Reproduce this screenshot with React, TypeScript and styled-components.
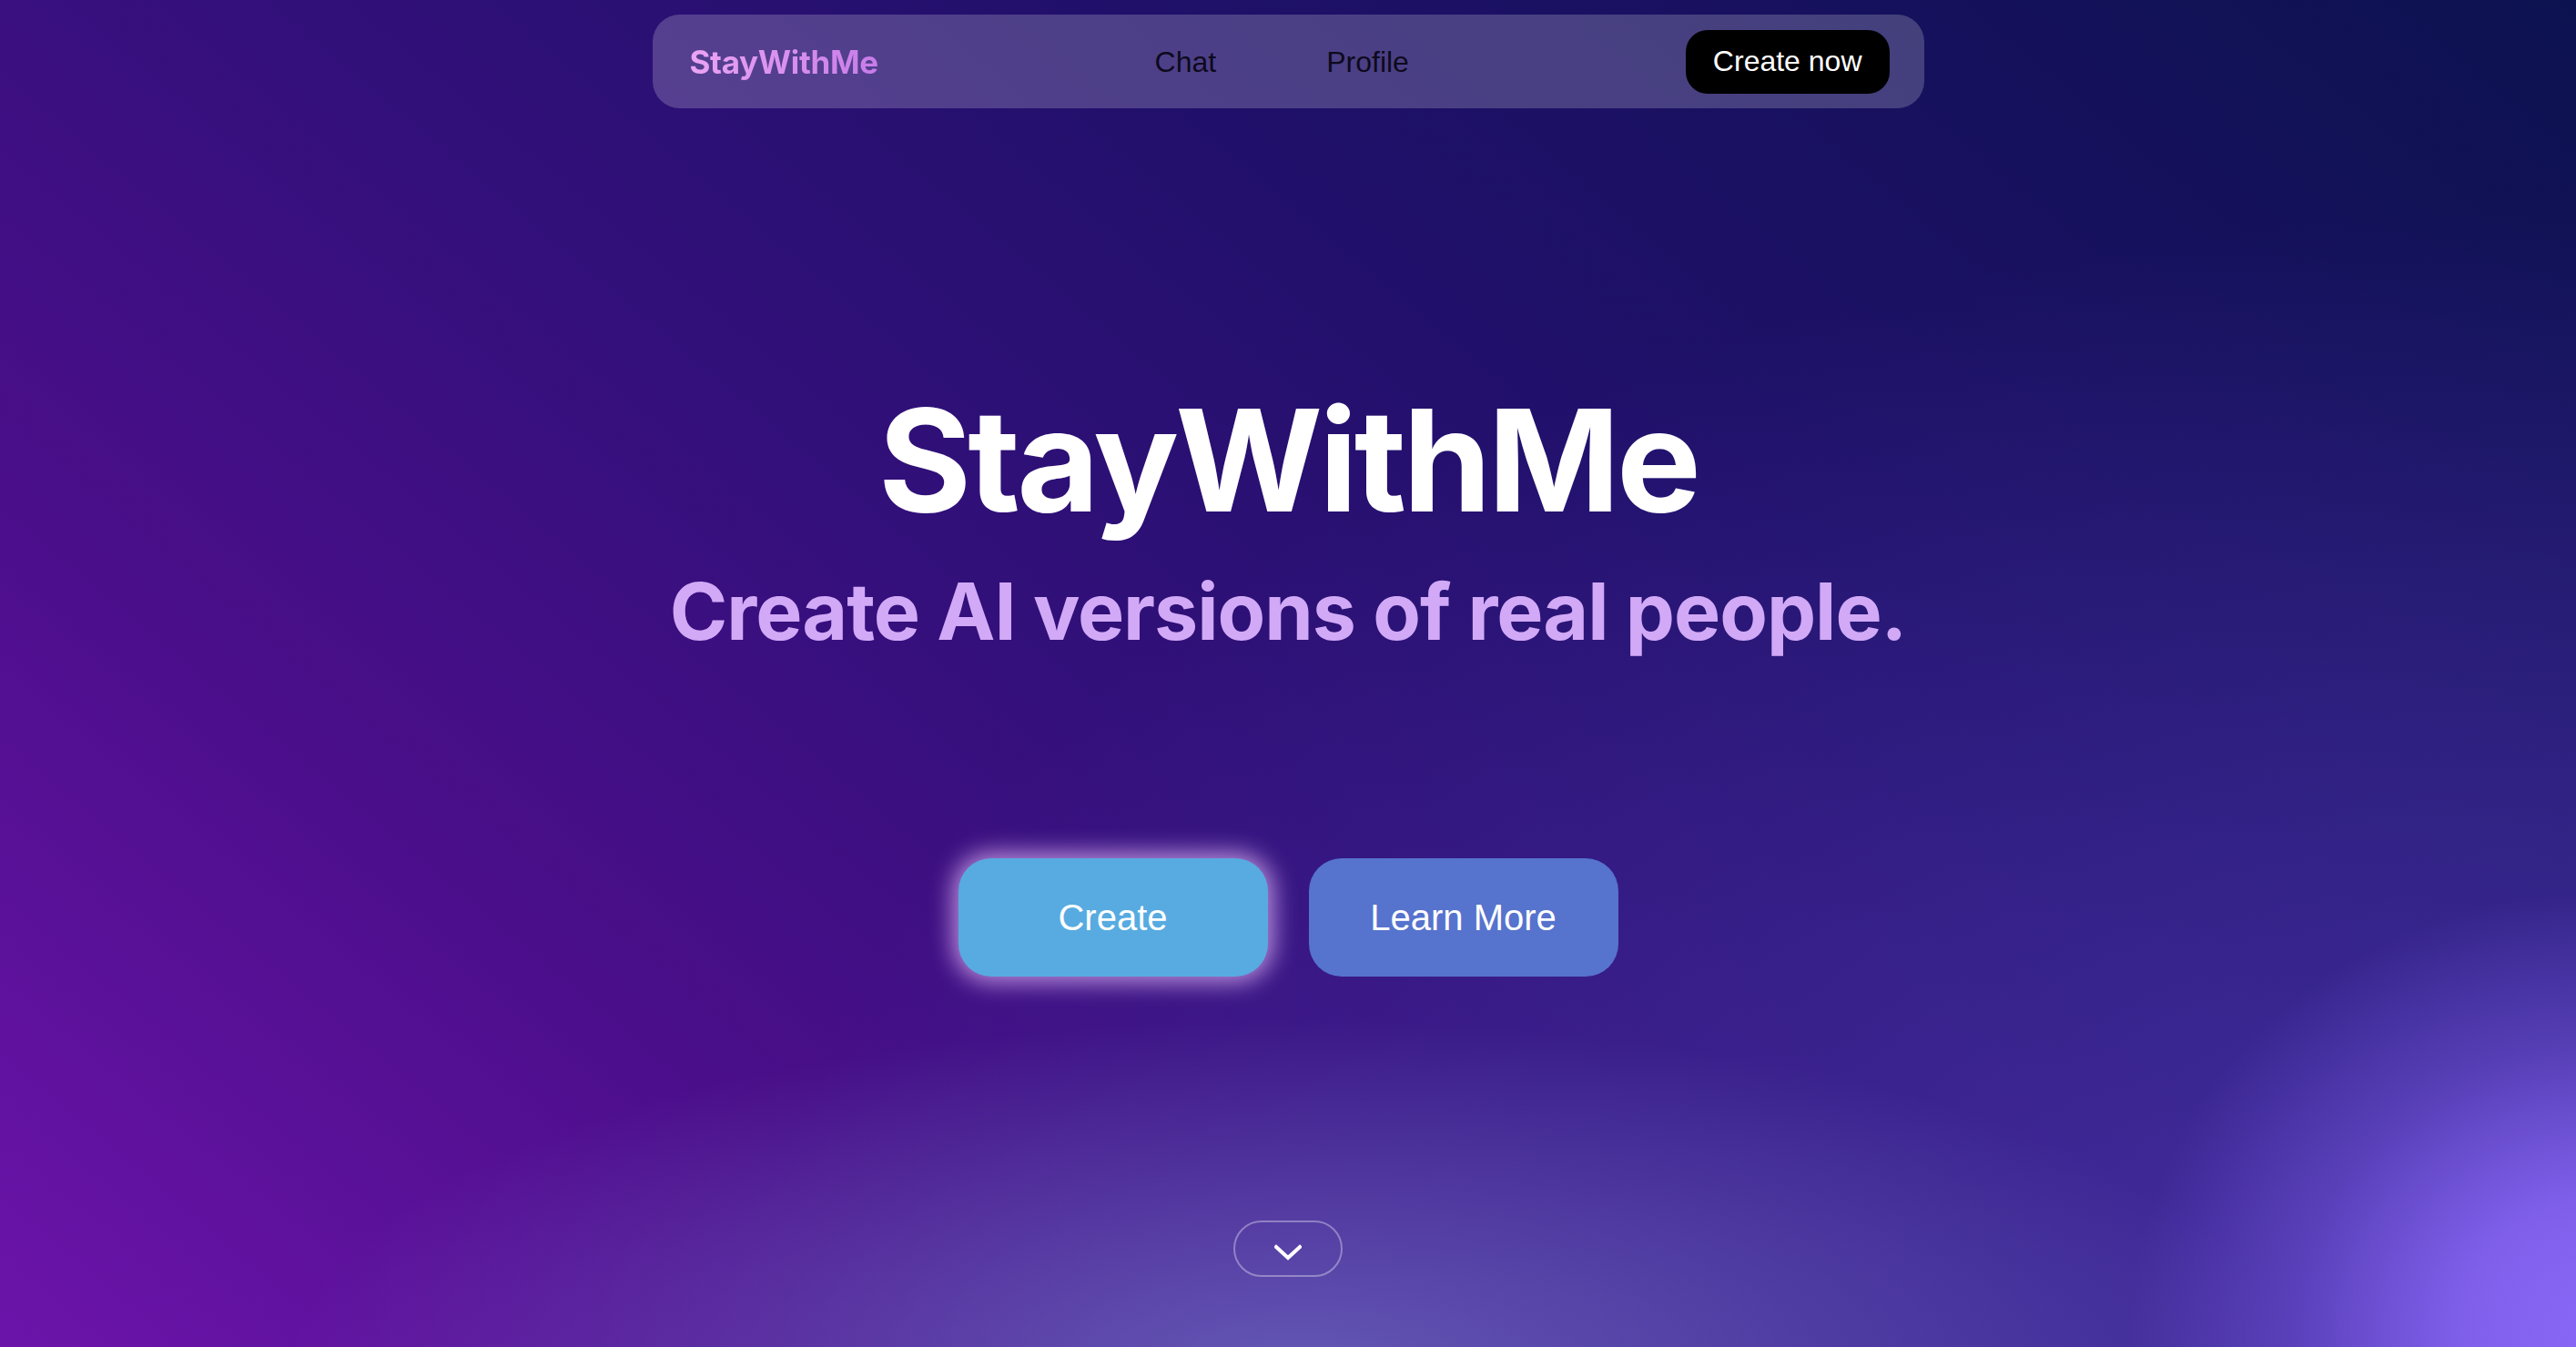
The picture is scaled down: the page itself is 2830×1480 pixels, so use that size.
import React from "react";
import styled, { createGlobalStyle } from "styled-components";

const Global = createGlobalStyle`
  html, body { margin: 0; padding: 0; }
  body { background: #2a0c6e; }
  * { box-sizing: border-box; }
`;

const Page = styled.div`
  width: 100%;
  height: 1480px;
  overflow: hidden;
  display: flex;
  flex-direction: column;
  align-items: center;
  background:
    radial-gradient(ellipse 520px 480px at 2860px 1460px, rgba(138, 104, 248, 1) 0%, rgba(138, 104, 248, 0.85) 30%, rgba(138, 104, 248, 0.35) 65%, rgba(138, 104, 248, 0) 100%),
    radial-gradient(ellipse 1100px 380px at 1420px 1500px, rgba(104, 98, 186, 0.85) 0%, rgba(104, 98, 186, 0) 100%),
    radial-gradient(ellipse 2000px 1250px at 2830px 1480px, rgba(74, 54, 170, 0.85) 0%, rgba(74, 54, 170, 0.45) 50%, rgba(74, 54, 170, 0) 100%),
    linear-gradient(40deg, #6c14aa 0%, #4a0e8a 25%, #32107a 45%, #20106a 65%, #0c1250 100%);
`;

const Nav = styled.nav`
  margin-top: 16px;
  width: 1397px;
  height: 103px;
  border-radius: 30px;
  background: rgba(255, 255, 255, 0.2);
  display: flex;
  align-items: center;
  justify-content: space-between;
  padding: 0 38px 0 41px;
`;

const Logo = styled.div`
  font-family: Inter, "Liberation Sans", sans-serif;
  font-weight: 700;
  font-size: 35px;
  letter-spacing: -0.01em;
  background: linear-gradient(90deg, #eca4f4 0%, #c67ce9 100%);
  -webkit-background-clip: text;
  background-clip: text;
  color: transparent;
`;

const Links = styled.div`
  display: flex;
  gap: 121px;
  padding-top: 2px;
`;

const NavLink = styled.a`
  font-family: "Liberation Sans", Arial, sans-serif;
  font-size: 32px;
  color: #0d0a1c;
  text-decoration: none;
`;

const CtaButton = styled.button`
  height: 70px;
  padding: 0 30px;
  border: none;
  border-radius: 24px;
  background: #000;
  color: #fff;
  font-family: "Liberation Sans", Arial, sans-serif;
  font-size: 32px;
`;

const Title = styled.h1`
  margin: 309px 0 0;
  font-family: Inter, "Liberation Sans", sans-serif;
  font-weight: 700;
  font-size: 156px;
  line-height: 1;
  letter-spacing: -0.025em;
  color: #fff;
`;

const Subtitle = styled.h2`
  margin: 45px 0 0;
  font-family: Inter, "Liberation Sans", sans-serif;
  font-weight: 700;
  font-size: 86px;
  line-height: 1;
  letter-spacing: -0.012em;
  color: #d1a9f6;
`;

const Actions = styled.div`
  margin-top: 228px;
  display: flex;
  gap: 45px;
`;

const HeroButton = styled.button<{ $variant: "primary" | "secondary" }>`
  width: 340px;
  height: 130px;
  border: none;
  border-radius: 36px;
  font-family: "Liberation Sans", Arial, sans-serif;
  font-size: 40px;
  color: #fff;
  background: ${(p) => (p.$variant === "primary" ? "#57abe0" : "#5673cd")};
  box-shadow: ${(p) =>
    p.$variant === "primary"
      ? "0 0 26px 6px rgba(236, 192, 255, 0.72)"
      : "none"};
`;

const ScrollButton = styled.button`
  margin-top: 268px;
  width: 120px;
  height: 62px;
  border-radius: 31px;
  border: 2px solid rgba(255, 255, 255, 0.35);
  background: transparent;
  display: flex;
  align-items: center;
  justify-content: center;
  padding: 8px 0 0;
`;

export default function App() {
  return (
    <>
      <Global />
      <Page>
        <Nav>
          <Logo>StayWithMe</Logo>
          <Links>
            <NavLink href="#">Chat</NavLink>
            <NavLink href="#">Profile</NavLink>
          </Links>
          <CtaButton>Create now</CtaButton>
        </Nav>
        <Title>StayWithMe</Title>
        <Subtitle>Create AI versions of real people.</Subtitle>
        <Actions>
          <HeroButton $variant="primary">Create</HeroButton>
          <HeroButton $variant="secondary">Learn More</HeroButton>
        </Actions>
        <ScrollButton aria-label="Scroll down">
          <svg width="30" height="18" viewBox="0 0 30 18" fill="none">
            <polyline
              points="2,3 15,15 28,3"
              stroke="#fff"
              strokeWidth="4"
              strokeLinecap="square"
              strokeLinejoin="miter"
            />
          </svg>
        </ScrollButton>
      </Page>
    </>
  );
}
